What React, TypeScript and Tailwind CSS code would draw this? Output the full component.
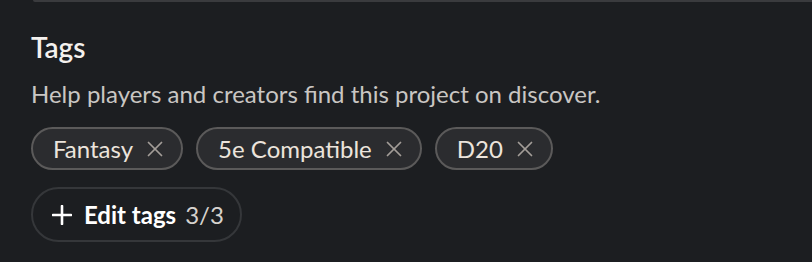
import { X } from "lucide-react";

const tags = ["Fantasy", "5e Compatible", "D20"];

export default function App() {
  return (
    <div className="h-[262px] w-[812px] overflow-hidden bg-[#1c1e21] font-['Lato',sans-serif] text-white">
      {/* bottom edge of the card above */}
      <div className="ml-[33px] h-[2px] rounded-bl-full bg-[#3a3b3e]" />

      <section className="px-[31px] pt-[28px]">
        <h2 className="text-[28px] leading-[34px] font-semibold text-[#f4f1ee]">
          Tags
        </h2>
        <p className="mt-[15px] text-[24px] leading-[30px] text-[#c9c6c3]">
          Help players and creators find this project on discover.
        </p>

        <div className="mt-[18px] flex gap-[13px]">
          {tags.map((tag) => (
            <div
              key={tag}
              className="flex h-[43px] items-center gap-[9px] rounded-full border-2 border-[#5b5a5a] bg-[#2b2c2f] pr-[13px] pl-[20px] text-[24px] text-[#ece4dc]"
            >
              <span>{tag}</span>
              <X className="h-[26px] w-[26px] text-[#a39d98]" strokeWidth={1.6} />
            </div>
          ))}
        </div>

        <button className="mt-[17px] flex h-[55px] items-center gap-[12px] rounded-full border-2 border-[#35373a] pr-[16px] pl-[19px] text-[24px]">
          <svg width="20" height="20" viewBox="0 0 20 20" className="text-white">
            <path
              d="M10 1v18M1 10h18"
              stroke="currentColor"
              strokeWidth="2.6"
              strokeLinecap="round"
            />
          </svg>
          <span className="font-bold text-white">Edit tags</span>
          <span className="-ml-[3px] text-[#d6d2ce]">3/3</span>
        </button>
      </section>
    </div>
  );
}
